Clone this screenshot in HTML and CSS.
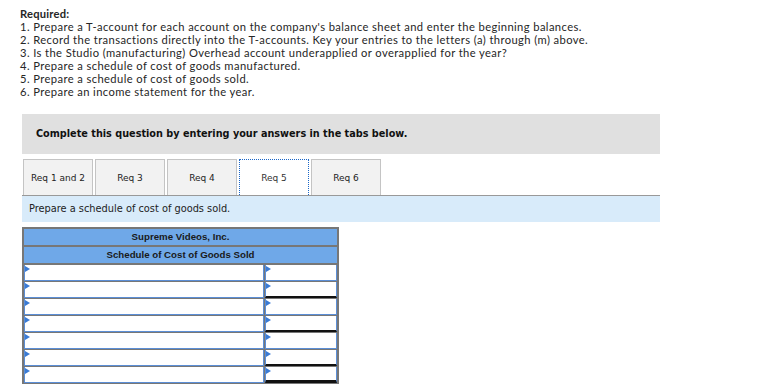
FILE: index.html
```html
<!DOCTYPE html>
<html>
<head>
<meta charset="utf-8">
<link rel="stylesheet" href="styles.css">
</head>
<body>
<div class="page">
  <div class="required">
    <div class="req-title">Required:</div>
    <div>1. Prepare a T-account for each account on the company's balance sheet and enter the beginning balances.</div>
    <div>2. Record the transactions directly into the T-accounts. Key your entries to the letters (a) through (m) above.</div>
    <div>3. Is the Studio (manufacturing) Overhead account underapplied or overapplied for the year?</div>
    <div>4. Prepare a schedule of cost of goods manufactured.</div>
    <div>5. Prepare a schedule of cost of goods sold.</div>
    <div>6. Prepare an income statement for the year.</div>
  </div>

  <div class="panel">
    <div class="instructions">Complete this question by entering your answers in the tabs below.</div>
    <div class="tabs">
      <div class="tab">Req 1 and 2</div>
      <div class="tab">Req 3</div>
      <div class="tab">Req 4</div>
      <div class="tab active">Req 5</div>
      <div class="tab">Req 6</div>
    </div>
    <div class="prompt">Prepare a schedule of cost of goods sold.</div>

    <div class="sheet">
      <div class="sheet-head">Supreme Videos, Inc.</div>
      <div class="sheet-head">Schedule of Cost of Goods Sold</div>
      <div class="row"><div class="cell label"></div><div class="cell amt"></div></div>
      <div class="row"><div class="cell label"></div><div class="cell amt rule"></div></div>
      <div class="row"><div class="cell label"></div><div class="cell amt"></div></div>
      <div class="row"><div class="cell label"></div><div class="cell amt rule"></div></div>
      <div class="row"><div class="cell label"></div><div class="cell amt"></div></div>
      <div class="row"><div class="cell label"></div><div class="cell amt rule"></div></div>
      <div class="row"><div class="cell label"></div><div class="cell amt rule thick"></div></div>
    </div>
  </div>
</div>
</body>
</html>
```

FILE: styles.css
```css
html, body {
  margin: 0;
  padding: 0;
  background: #fff;
}

.page {
  padding: 7px 0 0 20px;
}

.required {
  font-family: Lato, "Open Sans", sans-serif;
  font-size: 11.2px;
  letter-spacing: 0.4px;
  line-height: 13px;
  color: #262626;
}

.req-title {
  font-weight: bold;
  letter-spacing: 0.2px;
}

.panel {
  margin-left: 2px;
  width: 638px;
  margin-top: 16px;
}

.instructions {
  background: #e0e0e0;
  height: 40px;
  box-sizing: border-box;
  padding: 10px 14px;
  font-family: "DejaVu Sans", Verdana, sans-serif;
  font-weight: bold;
  font-size: 9.7px;
  line-height: 20px;
  color: #111;
}

.tabs {
  display: flex;
  gap: 2px;
  margin-top: 5px;
  padding-left: 1px;
  border-bottom: 1px solid #999;
}

.tab {
  width: 70px;
  height: 36px;
  box-sizing: border-box;
  background: #f2f2f2;
  border: 1px solid #c4c4c4;
  border-bottom: none;
  display: flex;
  align-items: center;
  justify-content: center;
  font-family: "DejaVu Sans", Verdana, sans-serif;
  font-size: 9px;
  color: #222;
}

.tab.active {
  background: #fff;
  border: 1px dotted #1a66c8;
  border-bottom: none;
  color: #333;
}

.prompt {
  background: #d8ebfa;
  height: 26px;
  box-sizing: border-box;
  padding: 7px 7px;
  font-family: "DejaVu Sans", Verdana, sans-serif;
  font-size: 9.8px;
  line-height: 12px;
  color: #222;
}

.sheet {
  margin-top: 5px;
  width: 317px;
  box-sizing: border-box;
  border: 2px solid #777;
  border-bottom: none;
  background: #6fa8e8;
}

.sheet-head {
  height: 18px;
  box-sizing: border-box;
  border-bottom: 2px solid #777;
  text-align: center;
  font-family: "Liberation Sans", Arial, sans-serif;
  font-weight: bold;
  font-size: 9.7px;
  line-height: 16px;
  color: #1a1a1a;
}

.row {
  display: flex;
  height: 17px;
  background: #777;
  gap: 1px;
  padding-bottom: 1px;
  box-sizing: border-box;
}

.cell {
  position: relative;
  background: #fff;
  box-sizing: border-box;
  border: 1px solid #5b8ed6;
  border-top-width: 0;
}

.cell::before {
  content: "";
  position: absolute;
  left: 0;
  top: 1px;
  border-left: 5px solid #3a7bd5;
  border-top: 3px solid transparent;
  border-bottom: 3px solid transparent;
}

.label {
  width: 240px;
}

.amt {
  flex: 1;
}

.rule {
  border-bottom: 2px solid #111;
}

.thick {
  border-bottom: 3px solid #111;
}
```
